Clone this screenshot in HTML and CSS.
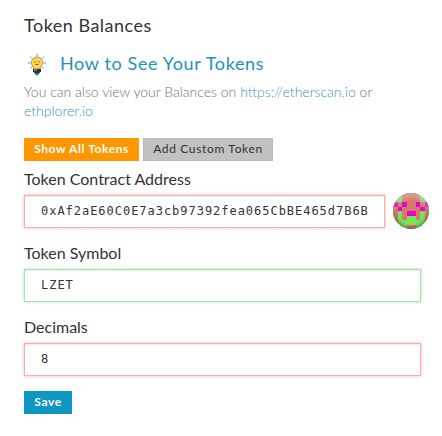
FILE: index.html
```html
<!DOCTYPE html>
<html lang="en">
<head>
  <meta charset="UTF-8">
  <meta name="viewport" content="width=device-width, initial-scale=1.0">
  <title>Token Balances</title>
  <link rel="stylesheet" href="styles.css">
</head>
<body>

  <section class="tokens">
    <h1 class="title">Token Balances</h1>

    <a class="help" href="#">
      <svg class="bulb" width="20" height="22" viewBox="0 0 20 22">
        <path d="M10 0v2.500M3 2.500l2 2M17 2.500l-2 2M1 9h2.500M16.500 9H19M3.500 14l1.500-1M16.500 14l-1.500-1" stroke="#888" stroke-width="1" fill="none"/>
        <path d="M10 3a5.700 5.700 0 0 0-5.700 5.700c0 2.500 2.100 3.700 2.400 6.300h6.600c.3-2.600 2.400-3.800 2.400-6.300A5.700 5.700 0 0 0 10 3z" fill="#fed54a" stroke="#7a6840" stroke-width=".6"/>
        <path d="M8 7.200v1.300M12 7.200v1.300M8.500 10.500h3" stroke="#5b4d31" stroke-width=".9"/>
        <path d="M6 15h8v2.500l-1.500 1.500h-5L6 17.500z" fill="#333"/>
        <path d="M7 16h3" stroke="#aaa"/>
        <path d="M7.500 19h5L11 21.200H9z" fill="#0e78a0"/>
      </svg>
      <span>How to See Your Tokens</span>
    </a>

    <p class="note">You can also view your Balances on <a href="#">https://etherscan.io</a> or <a href="#">ethplorer.io</a></p>

    <div class="buttons">
      <button type="button" class="btn btn-warning">Show All Tokens</button>
      <button type="button" class="btn btn-default">Add Custom Token</button>
    </div>

    <form>
      <label for="address">Token Contract Address</label>
      <div class="address-row">
        <input type="text" id="address" class="is-invalid" value="0xAf2aE60C0E7a3cb97392fea065CbBE465d7B6B" spellcheck="false">
        <div class="identicon">
          <svg width="36" height="36" viewBox="0 0 8 8" shape-rendering="crispEdges">
            <rect width="8" height="8" fill="#7be35b"/>
            <path d="M2 0h4v2h2v4H7V4H6v2H5V5H3v1H2V4H1v2H0V2h2zM0 6h1v1h1v1H0zM7 6h1v2H6V7h1zM3 7h2v1H3z" fill="#d67c68"/>
            <path d="M0 2h1v1H0zM2 2h1v1H2zM5 2h1v1H5zM7 2h1v1H7zM1 3h1v1H1zM6 3h1v1H6zM3 4h2v1H3z" fill="#e800d4"/>
          </svg>
        </div>
      </div>

      <label for="symbol">Token Symbol</label>
      <input type="text" id="symbol" class="is-valid" value="LZET" spellcheck="false">

      <label for="decimals">Decimals</label>
      <input type="text" id="decimals" class="is-invalid" value="8">

      <button type="button" class="btn btn-primary">Save</button>
    </form>
  </section>

</body>
</html>
```
FILE: styles.css
```css
body {
  margin: 0;
  background: #fff;
  color: #333;
  font-family: Lato, sans-serif;
}

.tokens {
  width: 397px;
  padding: 14px 0 0 24px;
}

a {
  color: #0e97c0;
  text-decoration: none;
}

.title {
  margin: 0;
  font-size: 18px;
  font-weight: 400;
  line-height: 22px;
  letter-spacing: 0.5px;
}

.help {
  display: flex;
  align-items: center;
  height: 22px;
  margin-top: 16px;
  padding-left: 3px;
  color: #1e92ba;
  font-size: 18px;
  letter-spacing: 0.64px;
}

.bulb {
  margin: 4px 13px 0 0;
}

.note {
  margin: 8px 0 0;
  color: #737373;
  font-size: 14px;
  font-weight: 300;
  line-height: 19px;
}

.note a {
  color: #3a94b8;
}

.buttons {
  display: flex;
  gap: 4px;
  margin-top: 18px;
}

.btn {
  display: block;
  height: 23px;
  padding: 0 10px 2px;
  border: 0;
  font-family: inherit;
  font-size: 12px;
  line-height: 20px;
  letter-spacing: 0.58px;
  white-space: nowrap;
  cursor: pointer;
}

.btn-warning {
  width: 115px;
  background: #ff9800;
  color: #fff;
  font-weight: 700;
}

.btn-default {
  width: 130px;
  padding: 0 9px 2px;
  border: 1px solid #b8b8b8;
  background: #c2c2c2;
  color: #333;
  line-height: 18px;
  letter-spacing: 0.66px;
}

.btn-primary {
  width: 48px;
  background: #0e97c0;
  color: #fff;
  font-weight: 700;
}

label {
  display: block;
  margin: 8px 0 6px;
  font-size: 16px;
  line-height: 20px;
}

input {
  display: block;
  box-sizing: border-box;
  width: 100%;
  height: 33px;
  margin: 0 0 15px;
  padding: 0 15px 2px 16px;
  border: 1px solid #ccc;
  border-radius: 0;
  background: #fff;
  color: #333;
  font-family: "DejaVu Sans Mono", monospace;
  font-size: 12px;
  letter-spacing: 0.97px;
}

.is-valid {
  border-color: #addfad;
  box-shadow: inset 0 1px 1px #eee, 0 0 3px #addfad;
}

.is-invalid {
  border-color: #f9aeae;
  box-shadow: inset 0 1px 1px #eee, 0 0 3px #f9aeae;
}

.address-row {
  display: flex;
  gap: 8px;
  width: 405px;
  height: 33px;
  margin-bottom: 15px;
}

.address-row input {
  flex: 1;
  min-width: 0;
  margin: 0;
}

.identicon {
  position: relative;
  width: 36px;
  height: 36px;
  margin-top: -2px;
  border-radius: 50%;
  overflow: hidden;
}

.identicon svg {
  display: block;
}

/* shading over the avatar */
.identicon::after {
  content: "";
  position: absolute;
  inset: 0;
  border-radius: 50%;
  box-shadow: inset 0 4px 4px rgba(255, 255, 255, 0.35), inset 0 -1px 4px rgba(0, 0, 0, 0.5);
}
```
